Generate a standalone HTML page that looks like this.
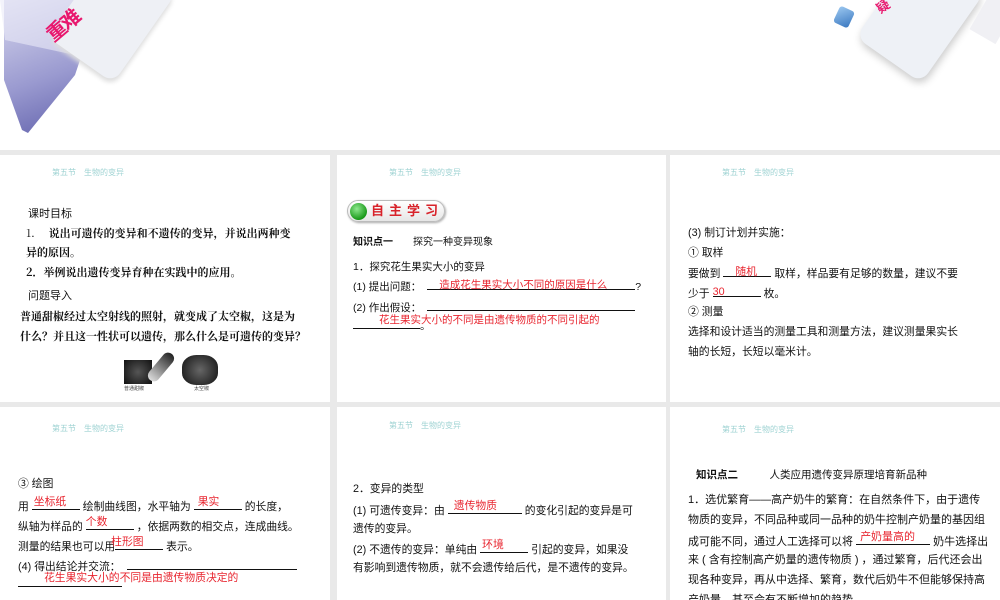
<!DOCTYPE html>
<html><head><meta charset="utf-8"><style>
*{margin:0;padding:0;box-sizing:border-box}
body{width:1000px;height:600px;overflow:hidden;background:#fff;position:relative;font-family:"Liberation Sans","Noto Sans CJK SC",sans-serif;color:#111}
.grid{position:absolute;left:0;top:150px;width:1000px;height:450px;background:#e9e9e9}
.p{position:absolute;background:#fff;overflow:hidden}
.t{position:absolute;font-size:11px;white-space:nowrap;line-height:14px}
.h{position:absolute;font-size:8px;color:#9fd3d3;white-space:nowrap}
.u{display:inline-block;border-bottom:1px solid #111;height:12px;vertical-align:baseline;position:relative}
.u span{position:absolute;left:4px;bottom:-3px;color:#e8252f;white-space:nowrap}
.ser{font-family:"Noto Serif CJK SC",serif;font-weight:bold}
</style></head><body>
<!-- top decorations -->
<div style="position:absolute;left:0;top:0;width:100px;height:135px;background:linear-gradient(160deg,#d8d8ee,#9a9ad0 55%,#5c5ca8);clip-path:polygon(8px 0,100px 0,75px 75px,28px 133px,22px 130px,4px 80px,4px 0)"></div>
<div style="position:absolute;left:0;top:0;width:100px;height:55px;background:rgba(235,235,248,0.6);clip-path:polygon(0 0,100px 0,75px 55px,5px 40px)"></div>
<div style="position:absolute;left:72px;top:-40px;width:80px;height:110px;transform:rotate(35deg);border-radius:12px;background:#eef0f5;box-shadow:2px 3px 5px #ddd"></div>
<div style="position:absolute;left:44px;top:10px;font-size:20px;color:#e8186e;font-weight:bold;transform:rotate(-40deg);letter-spacing:-2px">重难</div>
<div style="position:absolute;left:880px;top:-40px;width:80px;height:110px;transform:rotate(35deg);border-radius:12px;background:#eef1f6;box-shadow:3px 3px 8px #ccc"></div>
<div style="position:absolute;left:980px;top:-10px;width:30px;height:50px;background:#f0f0f4;transform:rotate(30deg)"></div>
<div style="position:absolute;left:836px;top:8px;width:16px;height:18px;background:linear-gradient(135deg,#9cc8f0,#3a78c0);transform:rotate(25deg);border-radius:3px"></div>
<div style="position:absolute;left:876px;top:-4px;font-size:13px;color:#e8186e;font-weight:bold;transform:rotate(-35deg)">疑</div>
<div class="grid"></div>

<!-- panel 1 -->
<div class="p" style="left:0;top:155px;width:330px;height:247px">
<div class="h" style="left:52px;top:12px">第五节　生物的变异</div>
<div class="t" style="left:28px;top:52px">课时目标</div>
<div class="t ser" style="left:26px;top:71px;font-weight:normal">1.　 <b>说出可遗传的变异和不遗传的变异，并说出两种变</b></div>
<div class="t ser" style="left:26px;top:90px">异的原因。</div>
<div class="t ser" style="left:26px;top:110px">2．举例说出遗传变异育种在实践中的应用。</div>
<div class="t" style="left:28px;top:134px">问题导入</div>
<div class="t ser" style="left:20px;top:154px">普通甜椒经过太空射线的照射，就变成了太空椒，这是为</div>
<div class="t ser" style="left:20px;top:174px">什么？并且这一性状可以遗传，那么什么是可遗传的变异？</div>
<div style="position:absolute;left:124px;top:205px;width:28px;height:24px;background:radial-gradient(circle,#555,#111);"></div>
<div style="position:absolute;left:155px;top:195px;width:12px;height:34px;background:linear-gradient(#222,#ddd);transform:rotate(40deg);border-radius:6px"></div>
<div style="position:absolute;left:182px;top:200px;width:36px;height:30px;background:radial-gradient(circle,#666,#111);border-radius:40%"></div>
<div class="h" style="left:124px;top:230px;color:#444;font-size:5px">普通甜椒</div>
<div class="h" style="left:194px;top:230px;color:#444;font-size:5px">太空椒</div>
</div>

<!-- panel 2 -->
<div class="p" style="left:337px;top:155px;width:329px;height:247px">
<div class="h" style="left:52px;top:12px">第五节　生物的变异</div>
<div style="position:absolute;left:10px;top:45px;width:98px;height:22px;border-radius:11px;border:1px solid #bbb;background:linear-gradient(#fff,#e6e6e6);box-shadow:1px 1px 2px #aaa"></div>
<div style="position:absolute;left:13px;top:48px;width:17px;height:17px;border-radius:50%;background:radial-gradient(circle at 40% 35%,#8fe88f,#1a9a1a 70%,#0a6a0a)"></div>
<div class="t" style="left:34px;top:49px;color:#d8222a;font-weight:bold;font-size:13px;letter-spacing:5px">自主学习</div>
<div class="t" style="left:16px;top:81px;font-weight:bold;font-size:10px">知识点一　　<span style="font-weight:normal">探究一种变异现象</span></div>
<div class="t" style="left:16px;top:105px;font-size:10.5px">1．探究花生果实大小的变异</div>
<div class="t" style="left:16px;top:123px;font-size:10.5px">(1) 提出问题：<span class="u" style="width:208px;margin-left:6px"><span style="left:12px">造成花生果实大小不同的原因是什么</span></span>?</div>
<div class="t" style="left:16px;top:144px;font-size:10.5px">(2) 作出假设：<span class="u" style="width:208px;margin-left:6px"></span></div>
<div class="t" style="left:16px;top:162px;font-size:10.5px"><span class="u" style="width:67px"><span style="left:26px;bottom:1px">花生果实大小的不同是由遗传物质的不同引起的</span></span>。</div>
</div>

<!-- panel 3 -->
<div class="p" style="left:670px;top:155px;width:330px;height:247px">
<div class="h" style="left:52px;top:12px">第五节　生物的变异</div>
<div class="t" style="left:18px;top:71px;font-size:10.8px">(3) 制订计划并实施：</div>
<div class="t" style="left:18px;top:91px;font-size:10.8px">① 取样</div>
<div class="t" style="left:18px;top:110px;font-size:10.8px">要做到 <span class="u" style="width:48px"><span style="left:12px">随机</span></span> 取样，样品要有足够的数量，建议不要</div>
<div class="t" style="left:18px;top:130px;font-size:10.8px">少于 <span class="u" style="width:48px"><span style="left:0">30</span></span> 枚。</div>
<div class="t" style="left:18px;top:150px;font-size:10.8px">② 测量</div>
<div class="t" style="left:18px;top:170px;font-size:10.8px">选择和设计适当的测量工具和测量方法，建议测量果实长</div>
<div class="t" style="left:18px;top:190px;font-size:10.8px">轴的长短，长短以毫米计。</div>
</div>

<!-- panel 4 -->
<div class="p" style="left:0;top:407px;width:330px;height:193px">
<div class="h" style="left:52px;top:16px">第五节　生物的变异</div>
<div class="t" style="left:18px;top:70px;font-size:10.8px">③ 绘图</div>
<div class="t" style="left:18px;top:91px;font-size:10.8px">用 <span class="u" style="width:48px"><span style="left:2px;bottom:0">坐标纸</span></span> 绘制曲线图，水平轴为 <span class="u" style="width:48px"><span style="left:4px;bottom:0">果实</span></span> 的长度，</div>
<div class="t" style="left:18px;top:111px;font-size:10.8px">纵轴为样品的 <span class="u" style="width:48px"><span style="left:0;bottom:0">个数</span></span> ，依据两数的相交点，连成曲线。</div>
<div class="t" style="left:18px;top:131px;font-size:10.8px">测量的结果也可以用<span class="u" style="width:48px"><span style="left:-4px;bottom:0">柱形图</span></span> 表示。</div>
<div class="t" style="left:18px;top:151px;font-size:10.8px">(4) 得出结论并交流：<span class="u" style="width:170px;margin-left:6px"></span></div>
<div class="t" style="left:18px;top:168px;font-size:10.8px"><span class="u" style="width:104px"><span style="left:26px;bottom:1px">花生果实大小的不同是由遗传物质决定的</span></span></div>
</div>

<!-- panel 5 -->
<div class="p" style="left:337px;top:407px;width:329px;height:193px">
<div class="h" style="left:52px;top:13px">第五节　生物的变异</div>
<div class="t" style="left:16px;top:75px;font-size:10.8px">2．变异的类型</div>
<div class="t" style="left:16px;top:95px;font-size:10.8px">(1) 可遗传变异：由 <span class="u" style="width:74px"><span style="left:6px;bottom:0">遗传物质</span></span> 的变化引起的变异是可</div>
<div class="t" style="left:16px;top:115px;font-size:10.8px">遗传的变异。</div>
<div class="t" style="left:16px;top:134px;font-size:10.8px">(2) 不遗传的变异：单纯由 <span class="u" style="width:48px"><span style="left:2px;bottom:0">环境</span></span> 引起的变异，如果没</div>
<div class="t" style="left:16px;top:154px;font-size:10.8px">有影响到遗传物质，就不会遗传给后代，是不遗传的变异。</div>
</div>

<!-- panel 6 -->
<div class="p" style="left:670px;top:407px;width:330px;height:193px">
<div class="h" style="left:52px;top:17px">第五节　生物的变异</div>
<div class="t" style="left:26px;top:61px;font-size:10.5px;font-weight:bold">知识点二　　　<span style="font-weight:normal">人类应用遗传变异原理培育新品种</span></div>
<div class="t" style="left:18px;top:86px;font-size:11px">1．选优繁育——高产奶牛的繁育：在自然条件下，由于遗传</div>
<div class="t" style="left:18px;top:106px;font-size:11px">物质的变异，不同品种或同一品种的奶牛控制产奶量的基因组</div>
<div class="t" style="left:18px;top:126px;font-size:11px">成可能不同，通过人工选择可以将 <span class="u" style="width:74px"><span style="left:4px;bottom:0">产奶量高的</span></span> 奶牛选择出</div>
<div class="t" style="left:18px;top:146px;font-size:11px">来 ( 含有控制高产奶量的遗传物质 ) ，通过繁育，后代还会出</div>
<div class="t" style="left:18px;top:166px;font-size:11px">现各种变异，再从中选择、繁育，数代后奶牛不但能够保持高</div>
<div class="t" style="left:18px;top:186px;font-size:11px">产奶量，甚至会有不断增加的趋势。</div>
</div>
</body></html>
